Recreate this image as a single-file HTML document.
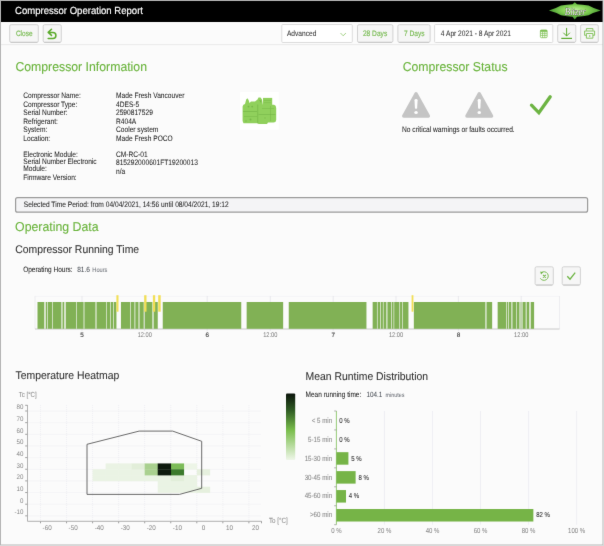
<!DOCTYPE html>
<html><head><meta charset="utf-8"><title>Compressor Operation Report</title>
<style>
html,body{margin:0;padding:0;background:#fbfbfb;}
body{width:604px;height:546px;overflow:hidden;font-family:"Liberation Sans", sans-serif;}
svg{display:block;will-change:transform;text-rendering:geometricPrecision;font-family:"Liberation Sans", sans-serif;}
</style></head><body>
<svg width="604" height="546" viewBox="0 0 604 546">
<defs><filter id="soft" filterUnits="userSpaceOnUse" x="0" y="0" width="604" height="546" color-interpolation-filters="sRGB"><feConvolveMatrix order="3" kernelMatrix="1 12 1 12 144 12 1 12 1" edgeMode="duplicate"/></filter></defs>
<g filter="url(#soft)">
<rect x="0" y="0" width="604" height="546" fill="#fbfbfb" />
<rect x="0" y="0" width="604" height="22" fill="#000" />
<text x="15" y="14.4" font-size="10.3" fill="#fff" textLength="128" lengthAdjust="spacingAndGlyphs" stroke="#fff" stroke-width="0.18">Compressor Operation Report</text>
<defs>
<radialGradient id="lg" cx="50%" cy="45%" r="55%">
<stop offset="0" stop-color="#c2f09e"/><stop offset="0.45" stop-color="#86d257"/><stop offset="1" stop-color="#3a8f28"/>
</radialGradient>
<linearGradient id="cb" x1="0" y1="0" x2="0" y2="1">
<stop offset="0" stop-color="#0b140b"/><stop offset="0.25" stop-color="#2f5b24"/><stop offset="0.55" stop-color="#79bd4b"/><stop offset="1" stop-color="#eef6e8"/>
</linearGradient>
</defs>
<path d="M548.9,10.4 Q555.5,8.8 561,5.6 Q567,4.6 572.6,4.3 L574.8,2.2 L577,4.3 Q582.6,4.6 588.6,5.6 Q594,8.8 600.8,10.4 Q594,12.1 588.6,15.3 Q582.6,16.4 577,16.7 L574.8,19.4 L572.6,16.7 Q567,16.4 561,15.3 Q555.5,12.1 548.9,10.4 Z" fill="url(#lg)"/>
<text x="564.8" y="14.9" font-size="10.6" fill="#e8e8e8" font-style="italic" font-family="Liberation Serif" stroke="#2a2a2a" stroke-width="0.45" paint-order="stroke" textLength="21" lengthAdjust="spacingAndGlyphs">Bitzer</text>
<rect x="9.7" y="24.7" width="28.599999999999998" height="17.599999999999998" rx="1.5" fill="#f6f6f6" stroke="#d2d2d2" stroke-width="1"/>
<line x1="10.7" y1="42.4" x2="37.3" y2="42.4" stroke="#c4c4c4" stroke-width="0.9"/>
<text x="15.9" y="35.9" font-size="7.836" fill="#72b84a"  textLength="16.69" lengthAdjust="spacingAndGlyphs" stroke="#72b84a" stroke-width="0.12">Close</text>
<rect x="43.2" y="24.7" width="18.099999999999994" height="17.599999999999998" rx="1.5" fill="#f6f6f6" stroke="#d2d2d2" stroke-width="1"/>
<line x1="44.2" y1="42.4" x2="60.3" y2="42.4" stroke="#c4c4c4" stroke-width="0.9"/>
<path d="M51.5,29.3 L48.2,32.4 L51.5,35.4 M48.4,32.4 L52.9,32.4 A3,3 0 0 1 52.9,38.4 L48.2,38.4" fill="none" stroke="#5cab2e" stroke-width="1.55" stroke-linecap="round" stroke-linejoin="round"/>
<rect x="281.8" y="24.5" width="70.5" height="18" rx="1" fill="#fff" stroke="#dcdcdc" stroke-width="1"/>
<text x="286.9" y="35.9" font-size="7.956" fill="#333"  textLength="29.49" lengthAdjust="spacingAndGlyphs" stroke="#333" stroke-width="0.05">Advanced</text>
<path d="M340.5,33 L343.2,35.8 L345.9,33" fill="none" stroke="#7cbf55" stroke-width="0.7"/>
<rect x="357.5" y="24.7" width="35.39999999999998" height="17.599999999999998" rx="1.5" fill="#f6f6f6" stroke="#d2d2d2" stroke-width="1"/>
<line x1="358.5" y1="42.4" x2="391.9" y2="42.4" stroke="#c4c4c4" stroke-width="0.9"/>
<text x="362.9" y="35.9" font-size="7.956" fill="#72b84a"  textLength="24.32" lengthAdjust="spacingAndGlyphs" stroke="#72b84a" stroke-width="0.12">28 Days</text>
<rect x="397.9" y="24.7" width="32.200000000000045" height="17.599999999999998" rx="1.5" fill="#f6f6f6" stroke="#d2d2d2" stroke-width="1"/>
<line x1="398.9" y1="42.4" x2="429.1" y2="42.4" stroke="#c4c4c4" stroke-width="0.9"/>
<text x="404" y="35.9" font-size="7.956" fill="#72b84a"  textLength="20.63" lengthAdjust="spacingAndGlyphs" stroke="#72b84a" stroke-width="0.12">7 Days</text>
<rect x="434.6" y="24.5" width="118.2" height="18" rx="1" fill="#fff" stroke="#dcdcdc" stroke-width="1"/>
<text x="440.8" y="35.9" font-size="7.956" fill="#333"  textLength="70.04" lengthAdjust="spacingAndGlyphs" stroke="#333" stroke-width="0.05">4 Apr 2021 - 8 Apr 2021</text>
<rect x="540.4" y="30" width="6.7" height="7.7" rx="1" fill="none" stroke="#7dc052" stroke-width="0.8"/>
<rect x="540.4" y="30" width="6.7" height="1.8" fill="#7dc052" />
<line x1="540.6" y1="33.3" x2="546.9" y2="33.3" stroke="#7dc052" stroke-width="0.7"/>
<line x1="540.6" y1="35.4" x2="546.9" y2="35.4" stroke="#7dc052" stroke-width="0.7"/>
<line x1="542.6" y1="31.5" x2="542.6" y2="37.6" stroke="#7dc052" stroke-width="0.7"/>
<line x1="544.8" y1="31.5" x2="544.8" y2="37.6" stroke="#7dc052" stroke-width="0.7"/>
<rect x="557.7" y="24.7" width="18.09999999999991" height="17.599999999999998" rx="1.5" fill="#f6f6f6" stroke="#d2d2d2" stroke-width="1"/>
<line x1="558.7" y1="42.4" x2="574.8" y2="42.4" stroke="#c4c4c4" stroke-width="0.9"/>
<path d="M566.6,28.3 L566.6,35.8 M563.6,33 L566.6,36 L569.6,33" fill="none" stroke="#5cab2e" stroke-width="1" stroke-linecap="round"/>
<rect x="561.3" y="37.8" width="10.7" height="1.2" fill="#5cab2e" />
<rect x="580.6" y="24.7" width="17.699999999999932" height="17.599999999999998" rx="1.5" fill="#f6f6f6" stroke="#d2d2d2" stroke-width="1"/>
<line x1="581.6" y1="42.4" x2="597.3" y2="42.4" stroke="#c4c4c4" stroke-width="0.9"/>
<path d="M586.4,30.6 L586.4,28.6 L592.9,28.6 L592.9,30.6 M586.4,35.3 L584.6,35.3 L584.6,31 L594.6,31 L594.6,35.3 L592.9,35.3 M586.4,33.5 L592.9,33.5 L592.9,38.2 L586.4,38.2 Z" fill="none" stroke="#7dc052" stroke-width="0.9" stroke-linejoin="round"/>
<circle cx="589.7" cy="36" r="0.8" fill="#7dc052"/>
<line x1="1" y1="44.6" x2="603" y2="44.6" stroke="#e6e6e6" stroke-width="0.8"/>
<text x="15.4" y="71.3" font-size="12.883" fill="#6ab43c"  textLength="131.61" lengthAdjust="spacingAndGlyphs" stroke="#6ab43c" stroke-width="0.1">Compressor Information</text>
<text x="23.3" y="97.9" font-size="7.956" fill="#222"  textLength="57.48" lengthAdjust="spacingAndGlyphs" stroke="#222" stroke-width="0.05">Compressor Name:</text>
<text x="23.3" y="106.5" font-size="7.956" fill="#222"  textLength="54.04" lengthAdjust="spacingAndGlyphs" stroke="#222" stroke-width="0.05">Compressor Type:</text>
<text x="23.3" y="115.2" font-size="7.956" fill="#222"  textLength="44.22" lengthAdjust="spacingAndGlyphs" stroke="#222" stroke-width="0.05">Serial Number:</text>
<text x="23.3" y="123.6" font-size="7.956" fill="#222"  textLength="34.64" lengthAdjust="spacingAndGlyphs" stroke="#222" stroke-width="0.05">Refrigerant:</text>
<text x="23.3" y="132.1" font-size="7.956" fill="#222"  textLength="23.95" lengthAdjust="spacingAndGlyphs" stroke="#222" stroke-width="0.05">System:</text>
<text x="23.3" y="140.6" font-size="7.956" fill="#222"  textLength="26.91" lengthAdjust="spacingAndGlyphs" stroke="#222" stroke-width="0.05">Location:</text>
<text x="23.3" y="156.9" font-size="7.956" fill="#222"  textLength="54.54" lengthAdjust="spacingAndGlyphs" stroke="#222" stroke-width="0.05">Electronic Module:</text>
<text x="23.3" y="164.4" font-size="7.956" fill="#222"  textLength="73.33" lengthAdjust="spacingAndGlyphs" stroke="#222" stroke-width="0.05">Serial Number Electronic</text>
<text x="23.3" y="171.1" font-size="7.956" fill="#222"  textLength="23.59" lengthAdjust="spacingAndGlyphs" stroke="#222" stroke-width="0.05">Module:</text>
<text x="23.3" y="180.1" font-size="7.956" fill="#222"  textLength="53.42" lengthAdjust="spacingAndGlyphs" stroke="#222" stroke-width="0.05">Firmware Version:</text>
<text x="116" y="97.9" font-size="7.956" fill="#222"  textLength="68.42" lengthAdjust="spacingAndGlyphs" stroke="#222" stroke-width="0.05">Made Fresh Vancouver</text>
<text x="116" y="106.5" font-size="7.956" fill="#222"  textLength="23.21" lengthAdjust="spacingAndGlyphs" stroke="#222" stroke-width="0.05">4DES-5</text>
<text x="116" y="115.2" font-size="7.956" fill="#222"  textLength="36.87" lengthAdjust="spacingAndGlyphs" stroke="#222" stroke-width="0.05">2590817529</text>
<text x="116" y="123.6" font-size="7.956" fill="#222"  textLength="20.27" lengthAdjust="spacingAndGlyphs" stroke="#222" stroke-width="0.05">R404A</text>
<text x="116" y="132.1" font-size="7.956" fill="#222"  textLength="42.37" lengthAdjust="spacingAndGlyphs" stroke="#222" stroke-width="0.05">Cooler system</text>
<text x="116" y="140.6" font-size="7.956" fill="#222"  textLength="56.74" lengthAdjust="spacingAndGlyphs" stroke="#222" stroke-width="0.05">Made Fresh POCO</text>
<text x="116" y="156.9" font-size="7.956" fill="#222"  textLength="31.68" lengthAdjust="spacingAndGlyphs" stroke="#222" stroke-width="0.05">CM-RC-01</text>
<text x="116" y="165.2" font-size="7.956" fill="#222"  textLength="81.85" lengthAdjust="spacingAndGlyphs" stroke="#222" stroke-width="0.05">815292000601FT19200013</text>
<text x="116" y="173.8" font-size="7.956" fill="#222"  textLength="9.22" lengthAdjust="spacingAndGlyphs" stroke="#222" stroke-width="0.05">n/a</text>
<rect x="239.8" y="92" width="38.9" height="37.6" fill="#ffffff" />
<g fill="#90d05c"><path d="M242.6,106.5 Q243,104.3 245,104 L246.2,99.5 L247.4,98.2 L248.6,100 L249.5,103 L251,101.5 L255,101.5 L257.5,99.5 L258.5,97.6 L260.5,97.5 L262,99.5 L263,105.5 L258.5,105.5 L258.5,123.3 L243.5,123.3 L242.6,121 Z"/><rect x="263" y="97.9" width="9.2" height="7.2"/><path d="M257,104.8 L274,104.8 Q276.2,105.2 276.2,108 L276.2,120 Q276,122.6 273.5,122.6 L268,122.6 L267,124 L258.5,124 L257,122 Z"/></g>
<g fill="#74b544" opacity="0.7"><rect x="244" y="116" width="13" height="0.6"/><rect x="264" y="100" width="7" height="0.6"/><rect x="264" y="102.5" width="7" height="0.6"/><circle cx="246" cy="121" r="0.8"/><circle cx="265" cy="118" r="0.7"/><rect x="262" y="108" width="12" height="0.6"/><rect x="270" y="106" width="0.6" height="15"/></g><g fill="#6fb043" opacity="0.75"><rect x="243" y="111.3" width="14" height="0.7"/><circle cx="248.5" cy="106.6" r="0.9"/><circle cx="252.2" cy="106.6" r="0.9"/><circle cx="250.5" cy="119.5" r="1"/><rect x="257.4" y="104.5" width="0.8" height="19"/><rect x="258.5" y="114" width="17" height="0.6"/><path d="M259,100 L261.5,100.5 L261,103 Z"/></g>
<text x="402.7" y="71.4" font-size="12.863" fill="#6ab43c"  textLength="104.84" lengthAdjust="spacingAndGlyphs" stroke="#6ab43c" stroke-width="0.1">Compressor Status</text>
<path d="M416.05,93.6 L428.5,116.1 L403.6,116.1 Z" fill="#c4c4c4" stroke="#c4c4c4" stroke-width="3.1" stroke-linejoin="round"/>
<path d="M414.5,100.2 Q414.5,98.9 416.05,98.9 Q417.6,98.9 417.6,100.2 L417.15000000000003,108.2 Q416.05,109.2 414.95,108.2 Z" fill="#fff"/>
<ellipse cx="416.05" cy="112.6" rx="1.75" ry="1.5" fill="#fff"/>
<path d="M479.25,93.6 L491.7,116.1 L466.8,116.1 Z" fill="#c4c4c4" stroke="#c4c4c4" stroke-width="3.1" stroke-linejoin="round"/>
<path d="M477.7,100.2 Q477.7,98.9 479.25,98.9 Q480.8,98.9 480.8,100.2 L480.35,108.2 Q479.25,109.2 478.15,108.2 Z" fill="#fff"/>
<ellipse cx="479.25" cy="112.6" rx="1.75" ry="1.5" fill="#fff"/>
<text x="402" y="132.2" font-size="7.98" fill="#222"  textLength="112.72" lengthAdjust="spacingAndGlyphs" stroke="#222" stroke-width="0.05">No critical warnings or faults occurred.</text>
<path d="M531.5,105.2 L538.9,112.8 L550.2,96.8" fill="none" stroke="#6db443" stroke-width="3.3" stroke-linecap="round" stroke-linejoin="miter"/>
<rect x="15.6" y="197.6" width="572" height="14.6" rx="2" fill="#f4f4f6" stroke="#9a9a9a" stroke-width="1.2"/>
<text x="23.8" y="206.6" font-size="7.968" fill="#222"  textLength="204.87" lengthAdjust="spacingAndGlyphs" stroke="#222" stroke-width="0.05">Selected Time Period: from 04/04/2021, 14:56 until 08/04/2021, 19:12</text>
<text x="15.1" y="230.5" font-size="12.915" fill="#6ab43c"  textLength="83.42" lengthAdjust="spacingAndGlyphs" stroke="#6ab43c" stroke-width="0.1">Operating Data</text>
<text x="15.3" y="253.0" font-size="11.139" fill="#333"  textLength="123.81" lengthAdjust="spacingAndGlyphs" stroke="#333" stroke-width="0.08">Compressor Running Time</text>
<text x="23.2" y="271.8" font-size="7.788" fill="#222"  textLength="49.42" lengthAdjust="spacingAndGlyphs" stroke="#222" stroke-width="0.05">Operating Hours:</text>
<text x="77.2" y="271.9" font-size="7.567" fill="#4a4f56"  textLength="12.81" lengthAdjust="spacingAndGlyphs" stroke="#4a4f56" stroke-width="0.05">81.6</text>
<text x="92.3" y="271.9" font-size="6.509" fill="#6f737a"  textLength="15.10" lengthAdjust="spacingAndGlyphs" stroke="#6f737a" stroke-width="0.05">Hours</text>
<rect x="535.1" y="266.8" width="18.199999999999932" height="18.19999999999999" rx="1.5" fill="#f6f6f6" stroke="#d2d2d2" stroke-width="1"/>
<line x1="536.1" y1="285.1" x2="552.3" y2="285.1" stroke="#c4c4c4" stroke-width="0.9"/>
<path d="M541.5,272.5 A4.3,4.3 0 1 1 540.3,278.3" fill="none" stroke="#6db443" stroke-width="0.9"/>
<path d="M540.2,271.4 L543.2,272.3 L541,274.6 Z" fill="#6db443"/>
<path d="M543,274.8 L545.8,277.6 M545.8,274.8 L543,277.6" stroke="#6db443" stroke-width="1.1"/>
<rect x="562.2" y="266.8" width="18.199999999999932" height="18.19999999999999" rx="1.5" fill="#f6f6f6" stroke="#d2d2d2" stroke-width="1"/>
<line x1="563.2" y1="285.1" x2="579.4" y2="285.1" stroke="#c4c4c4" stroke-width="0.9"/>
<path d="M567.3,276.3 L570,279.2 L575.2,272.6" fill="none" stroke="#6db443" stroke-width="1.3"/>
<line x1="35" y1="296.4" x2="559.5" y2="296.4" stroke="#ececf0" stroke-width="0.5"/>
<line x1="35" y1="296" x2="35" y2="329" stroke="#e4e4ea" stroke-width="0.6"/>
<line x1="559.5" y1="296" x2="559.5" y2="329" stroke="#e4e4ea" stroke-width="0.6"/>
<line x1="82" y1="296" x2="82" y2="331" stroke="#dedee6" stroke-width="0.6"/>
<line x1="144.6" y1="296" x2="144.6" y2="331" stroke="#dedee6" stroke-width="0.6"/>
<line x1="207.2" y1="296" x2="207.2" y2="331" stroke="#dedee6" stroke-width="0.6"/>
<line x1="270.3" y1="296" x2="270.3" y2="331" stroke="#dedee6" stroke-width="0.6"/>
<line x1="333.2" y1="296" x2="333.2" y2="331" stroke="#dedee6" stroke-width="0.6"/>
<line x1="396" y1="296" x2="396" y2="331" stroke="#dedee6" stroke-width="0.6"/>
<line x1="458.4" y1="296" x2="458.4" y2="331" stroke="#dedee6" stroke-width="0.6"/>
<line x1="521.2" y1="296" x2="521.2" y2="331" stroke="#dedee6" stroke-width="0.6"/>
<line x1="35" y1="329" x2="559.5" y2="329" stroke="#c8c8c8" stroke-width="1"/>
<rect x="37.5" y="302" width="6.8" height="26.8" fill="#81b155" />
<rect x="45.7" y="302" width="1.65" height="26.8" fill="#81b155" />
<rect x="47.95" y="302" width="4.35" height="26.8" fill="#81b155" />
<rect x="52.9" y="302" width="8.5" height="26.8" fill="#81b155" />
<rect x="62.5" y="302" width="1.8" height="26.8" fill="#81b155" />
<rect x="65.7" y="302" width="10.35" height="26.8" fill="#81b155" />
<rect x="76.65" y="302" width="6.95" height="26.8" fill="#81b155" />
<rect x="84.4" y="302" width="11.1" height="26.8" fill="#81b155" />
<rect x="96.5" y="302" width="9.9" height="26.8" fill="#81b155" />
<rect x="107.0" y="302" width="3.35" height="26.8" fill="#81b155" />
<rect x="110.95" y="302" width="2.3" height="26.8" fill="#81b155" />
<rect x="113.85" y="302" width="2.6" height="26.8" fill="#81b155" />
<rect x="120.95" y="302" width="9.2" height="26.8" fill="#81b155" />
<rect x="130.75" y="302" width="3.75" height="26.8" fill="#81b155" />
<rect x="135.3" y="302" width="3.2" height="26.8" fill="#81b155" />
<rect x="139.5" y="302" width="4.2" height="26.8" fill="#81b155" />
<rect x="144.7" y="302" width="7.7" height="26.8" fill="#81b155" />
<rect x="153.6" y="302" width="4.15" height="26.8" fill="#81b155" />
<rect x="162.75" y="302" width="78.5" height="26.8" fill="#81b155" />
<rect x="246.65" y="302" width="36.5" height="26.8" fill="#81b155" />
<rect x="288.75" y="302" width="77.7" height="26.8" fill="#81b155" />
<rect x="372.65" y="302" width="4.3" height="26.8" fill="#81b155" />
<rect x="377.55" y="302" width="2.65" height="26.8" fill="#81b155" />
<rect x="380.8" y="302" width="2.1" height="26.8" fill="#81b155" />
<rect x="383.5" y="302" width="2.9" height="26.8" fill="#81b155" />
<rect x="387.4" y="302" width="3.75" height="26.8" fill="#81b155" />
<rect x="391.75" y="302" width="1.85" height="26.8" fill="#81b155" />
<rect x="394.2" y="302" width="5.25" height="26.8" fill="#81b155" />
<rect x="400.05" y="302" width="2.35" height="26.8" fill="#81b155" />
<rect x="403.0" y="302" width="5.45" height="26.8" fill="#81b155" />
<rect x="413.85" y="302" width="71.55" height="26.8" fill="#81b155" />
<rect x="486.5" y="302" width="5.65" height="26.8" fill="#81b155" />
<rect x="497.65" y="302" width="8.5" height="26.8" fill="#81b155" />
<rect x="506.75" y="302" width="1.5" height="26.8" fill="#81b155" />
<rect x="508.85" y="302" width="2.55" height="26.8" fill="#81b155" />
<rect x="512.4" y="302" width="4.0" height="26.8" fill="#81b155" />
<rect x="517.0" y="302" width="2.25" height="26.8" fill="#81b155" />
<rect x="522.85" y="302" width="2.85" height="26.8" fill="#81b155" />
<rect x="526.6" y="302" width="2.7" height="26.8" fill="#81b155" />
<rect x="530.7" y="302" width="3.4" height="26.8" fill="#81b155" />
<rect x="519.3" y="302" width="3.6" height="26.8" fill="#81b155" opacity="0.45"/>
<rect x="116.4" y="295.2" width="2.0999999999999943" height="16.5" fill="#f2df55" />
<rect x="144.2" y="295.2" width="2.3000000000000114" height="16.5" fill="#f2df55" />
<rect x="152.9" y="295.2" width="2.299999999999983" height="16.5" fill="#f2df55" />
<rect x="158.2" y="295.2" width="2.5" height="16.5" fill="#f2df55" />
<rect x="411.6" y="295.2" width="1.7999999999999545" height="16.5" fill="#f2df55" />
<text x="82" y="336.6" font-size="6.3" fill="#444" text-anchor="middle"  stroke="#444" stroke-width="0.12">5</text>
<text x="144.8" y="336.5" font-size="6.804" fill="#7a7a7a" text-anchor="middle"  textLength="14.19" lengthAdjust="spacingAndGlyphs">12:00</text>
<text x="207.2" y="336.6" font-size="6.3" fill="#444" text-anchor="middle"  stroke="#444" stroke-width="0.12">6</text>
<text x="270.3" y="336.5" font-size="6.804" fill="#7a7a7a" text-anchor="middle"  textLength="14.19" lengthAdjust="spacingAndGlyphs">12:00</text>
<text x="333.2" y="336.6" font-size="6.3" fill="#444" text-anchor="middle"  stroke="#444" stroke-width="0.12">7</text>
<text x="396" y="336.5" font-size="6.804" fill="#7a7a7a" text-anchor="middle"  textLength="14.19" lengthAdjust="spacingAndGlyphs">12:00</text>
<text x="458.4" y="336.6" font-size="6.3" fill="#444" text-anchor="middle"  stroke="#444" stroke-width="0.12">8</text>
<text x="521.2" y="336.5" font-size="6.804" fill="#7a7a7a" text-anchor="middle"  textLength="14.19" lengthAdjust="spacingAndGlyphs">12:00</text>
<text x="15.5" y="379.2" font-size="11.16" fill="#333"  textLength="103.77" lengthAdjust="spacingAndGlyphs" stroke="#333" stroke-width="0.08">Temperature Heatmap</text>
<text x="18.7" y="396.8" font-size="7.32" fill="#8a8a8a"  textLength="18.03" lengthAdjust="spacingAndGlyphs" stroke="#8a8a8a" stroke-width="0.05">Tc [°C]</text>
<line x1="27.5" y1="411.00" x2="261.5" y2="411.00" stroke="#e2e2ea" stroke-width="0.5" stroke-dasharray="1,1"/>
<line x1="25.2" y1="411.00" x2="27.5" y2="411.00" stroke="#888" stroke-width="0.8"/>
<text x="23.5" y="409.40000000000003" font-size="6.696" fill="#858585" text-anchor="end"  textLength="6.90" lengthAdjust="spacingAndGlyphs">80</text>
<line x1="27.5" y1="422.65" x2="261.5" y2="422.65" stroke="#e2e2ea" stroke-width="0.5" stroke-dasharray="1,1"/>
<line x1="25.2" y1="422.65" x2="27.5" y2="422.65" stroke="#888" stroke-width="0.8"/>
<text x="23.5" y="421.05" font-size="6.696" fill="#858585" text-anchor="end"  textLength="6.90" lengthAdjust="spacingAndGlyphs">70</text>
<line x1="27.5" y1="434.30" x2="261.5" y2="434.30" stroke="#e2e2ea" stroke-width="0.5" stroke-dasharray="1,1"/>
<line x1="25.2" y1="434.30" x2="27.5" y2="434.30" stroke="#888" stroke-width="0.8"/>
<text x="23.5" y="432.70000000000005" font-size="6.696" fill="#858585" text-anchor="end"  textLength="6.90" lengthAdjust="spacingAndGlyphs">60</text>
<line x1="27.5" y1="445.95" x2="261.5" y2="445.95" stroke="#e2e2ea" stroke-width="0.5" stroke-dasharray="1,1"/>
<line x1="25.2" y1="445.95" x2="27.5" y2="445.95" stroke="#888" stroke-width="0.8"/>
<text x="23.5" y="444.35" font-size="6.696" fill="#858585" text-anchor="end"  textLength="6.90" lengthAdjust="spacingAndGlyphs">50</text>
<line x1="27.5" y1="457.60" x2="261.5" y2="457.60" stroke="#e2e2ea" stroke-width="0.5" stroke-dasharray="1,1"/>
<line x1="25.2" y1="457.60" x2="27.5" y2="457.60" stroke="#888" stroke-width="0.8"/>
<text x="23.5" y="456.00000000000006" font-size="6.696" fill="#858585" text-anchor="end"  textLength="6.90" lengthAdjust="spacingAndGlyphs">40</text>
<line x1="27.5" y1="469.25" x2="261.5" y2="469.25" stroke="#e2e2ea" stroke-width="0.5" stroke-dasharray="1,1"/>
<line x1="25.2" y1="469.25" x2="27.5" y2="469.25" stroke="#888" stroke-width="0.8"/>
<text x="23.5" y="467.65000000000003" font-size="6.696" fill="#858585" text-anchor="end"  textLength="6.90" lengthAdjust="spacingAndGlyphs">30</text>
<line x1="27.5" y1="480.90" x2="261.5" y2="480.90" stroke="#e2e2ea" stroke-width="0.5" stroke-dasharray="1,1"/>
<line x1="25.2" y1="480.90" x2="27.5" y2="480.90" stroke="#888" stroke-width="0.8"/>
<text x="23.5" y="479.3" font-size="6.696" fill="#858585" text-anchor="end"  textLength="6.90" lengthAdjust="spacingAndGlyphs">20</text>
<line x1="27.5" y1="492.55" x2="261.5" y2="492.55" stroke="#e2e2ea" stroke-width="0.5" stroke-dasharray="1,1"/>
<line x1="25.2" y1="492.55" x2="27.5" y2="492.55" stroke="#888" stroke-width="0.8"/>
<text x="23.5" y="490.95000000000005" font-size="6.696" fill="#858585" text-anchor="end"  textLength="6.90" lengthAdjust="spacingAndGlyphs">10</text>
<line x1="27.5" y1="504.20" x2="261.5" y2="504.20" stroke="#e2e2ea" stroke-width="0.5" stroke-dasharray="1,1"/>
<line x1="25.2" y1="504.20" x2="27.5" y2="504.20" stroke="#888" stroke-width="0.8"/>
<text x="23.5" y="502.6" font-size="6.696" fill="#858585" text-anchor="end"  textLength="3.45" lengthAdjust="spacingAndGlyphs">0</text>
<line x1="27.5" y1="515.85" x2="261.5" y2="515.85" stroke="#e2e2ea" stroke-width="0.5" stroke-dasharray="1,1"/>
<line x1="25.2" y1="515.85" x2="27.5" y2="515.85" stroke="#888" stroke-width="0.8"/>
<text x="23.5" y="514.25" font-size="6.696" fill="#858585" text-anchor="end"  textLength="8.96" lengthAdjust="spacingAndGlyphs">-10</text>
<line x1="40.50" y1="405.1" x2="40.50" y2="521.3" stroke="#e2e2ea" stroke-width="0.5" stroke-dasharray="1,1"/>
<line x1="40.50" y1="521.3" x2="40.50" y2="523.3" stroke="#888" stroke-width="0.8"/>
<text x="47.1" y="529.7" font-size="6.804" fill="#858585" text-anchor="middle"  textLength="9.11" lengthAdjust="spacingAndGlyphs">-60</text>
<line x1="66.55" y1="405.1" x2="66.55" y2="521.3" stroke="#e2e2ea" stroke-width="0.5" stroke-dasharray="1,1"/>
<line x1="66.55" y1="521.3" x2="66.55" y2="523.3" stroke="#888" stroke-width="0.8"/>
<text x="73.14999999999999" y="529.7" font-size="6.804" fill="#858585" text-anchor="middle"  textLength="9.11" lengthAdjust="spacingAndGlyphs">-50</text>
<line x1="92.60" y1="405.1" x2="92.60" y2="521.3" stroke="#e2e2ea" stroke-width="0.5" stroke-dasharray="1,1"/>
<line x1="92.60" y1="521.3" x2="92.60" y2="523.3" stroke="#888" stroke-width="0.8"/>
<text x="99.19999999999999" y="529.7" font-size="6.804" fill="#858585" text-anchor="middle"  textLength="9.11" lengthAdjust="spacingAndGlyphs">-40</text>
<line x1="118.65" y1="405.1" x2="118.65" y2="521.3" stroke="#e2e2ea" stroke-width="0.5" stroke-dasharray="1,1"/>
<line x1="118.65" y1="521.3" x2="118.65" y2="523.3" stroke="#888" stroke-width="0.8"/>
<text x="125.25" y="529.7" font-size="6.804" fill="#858585" text-anchor="middle"  textLength="9.11" lengthAdjust="spacingAndGlyphs">-30</text>
<line x1="144.70" y1="405.1" x2="144.70" y2="521.3" stroke="#e2e2ea" stroke-width="0.5" stroke-dasharray="1,1"/>
<line x1="144.70" y1="521.3" x2="144.70" y2="523.3" stroke="#888" stroke-width="0.8"/>
<text x="151.29999999999998" y="529.7" font-size="6.804" fill="#858585" text-anchor="middle"  textLength="9.11" lengthAdjust="spacingAndGlyphs">-20</text>
<line x1="170.75" y1="405.1" x2="170.75" y2="521.3" stroke="#e2e2ea" stroke-width="0.5" stroke-dasharray="1,1"/>
<line x1="170.75" y1="521.3" x2="170.75" y2="523.3" stroke="#888" stroke-width="0.8"/>
<text x="177.35" y="529.7" font-size="6.804" fill="#858585" text-anchor="middle"  textLength="9.11" lengthAdjust="spacingAndGlyphs">-10</text>
<line x1="196.80" y1="405.1" x2="196.80" y2="521.3" stroke="#e2e2ea" stroke-width="0.5" stroke-dasharray="1,1"/>
<line x1="196.80" y1="521.3" x2="196.80" y2="523.3" stroke="#888" stroke-width="0.8"/>
<text x="203.4" y="529.7" font-size="6.804" fill="#858585" text-anchor="middle"  textLength="3.50" lengthAdjust="spacingAndGlyphs">0</text>
<line x1="222.85" y1="405.1" x2="222.85" y2="521.3" stroke="#e2e2ea" stroke-width="0.5" stroke-dasharray="1,1"/>
<line x1="222.85" y1="521.3" x2="222.85" y2="523.3" stroke="#888" stroke-width="0.8"/>
<text x="229.45" y="529.7" font-size="6.804" fill="#858585" text-anchor="middle"  textLength="7.01" lengthAdjust="spacingAndGlyphs">10</text>
<line x1="248.90" y1="405.1" x2="248.90" y2="521.3" stroke="#e2e2ea" stroke-width="0.5" stroke-dasharray="1,1"/>
<line x1="248.90" y1="521.3" x2="248.90" y2="523.3" stroke="#888" stroke-width="0.8"/>
<text x="255.5" y="529.7" font-size="6.804" fill="#858585" text-anchor="middle"  textLength="7.01" lengthAdjust="spacingAndGlyphs">20</text>
<line x1="25.2" y1="405.3" x2="27.5" y2="405.3" stroke="#888" stroke-width="0.8"/>
<line x1="27.5" y1="405" x2="27.5" y2="521.3" stroke="#a8a8a8" stroke-width="0.9"/>
<line x1="27.5" y1="521.3" x2="261.5" y2="521.3" stroke="#a8a8a8" stroke-width="0.9"/>
<line x1="261.5" y1="521.3" x2="261.5" y2="523.3" stroke="#888" stroke-width="0.8"/>
<text x="268.9" y="523.1" font-size="7.56" fill="#8a8a8a"  textLength="18.97" lengthAdjust="spacingAndGlyphs" stroke="#8a8a8a" stroke-width="0.05">To [°C]</text>
<rect x="183.78" y="463.43" width="13.33" height="6.13" fill="#edf5e7" />
<rect x="105.62" y="463.43" width="13.33" height="6.13" fill="#eaf3e4" />
<rect x="118.65" y="463.43" width="13.33" height="6.13" fill="#eaf3e4" />
<rect x="92.60" y="469.25" width="13.33" height="6.13" fill="#eaf3e4" />
<rect x="105.62" y="469.25" width="13.33" height="6.13" fill="#eaf3e4" />
<rect x="118.65" y="469.25" width="13.33" height="6.13" fill="#eaf3e4" />
<rect x="131.68" y="469.25" width="13.33" height="6.13" fill="#eaf3e4" />
<rect x="92.60" y="475.07" width="13.33" height="6.13" fill="#eaf3e4" />
<rect x="105.62" y="475.07" width="13.33" height="6.13" fill="#eaf3e4" />
<rect x="118.65" y="475.07" width="13.33" height="6.13" fill="#eaf3e4" />
<rect x="131.68" y="475.07" width="13.33" height="6.13" fill="#eaf3e4" />
<rect x="144.70" y="475.07" width="13.33" height="6.13" fill="#eaf3e4" />
<rect x="157.72" y="475.07" width="13.33" height="6.13" fill="#eaf3e4" />
<rect x="183.78" y="475.07" width="13.33" height="6.13" fill="#eaf3e4" />
<rect x="157.72" y="480.90" width="13.33" height="6.13" fill="#eaf3e4" />
<rect x="170.75" y="480.90" width="13.33" height="6.13" fill="#eaf3e4" />
<rect x="183.78" y="480.90" width="13.33" height="6.13" fill="#eaf3e4" />
<rect x="157.72" y="486.73" width="13.33" height="6.13" fill="#eaf3e4" />
<rect x="170.75" y="486.73" width="13.33" height="6.13" fill="#eaf3e4" />
<rect x="183.78" y="486.73" width="13.33" height="6.13" fill="#eaf3e4" />
<rect x="196.80" y="469.25" width="13.33" height="6.13" fill="#e6f0de" />
<rect x="196.80" y="486.73" width="13.33" height="6.13" fill="#e6f0de" />
<rect x="131.68" y="463.43" width="13.33" height="6.13" fill="#e2eed9" />
<rect x="170.75" y="475.07" width="13.33" height="6.13" fill="#e2eed9" />
<rect x="144.70" y="463.43" width="13.33" height="6.13" fill="#a9d08f" />
<rect x="144.70" y="469.25" width="13.33" height="6.13" fill="#a9d08f" />
<rect x="170.75" y="463.43" width="13.33" height="6.13" fill="#7cbc58" />
<rect x="170.75" y="469.25" width="13.33" height="6.13" fill="#3c7a2c" />
<rect x="157.72" y="463.43" width="13.33" height="6.13" fill="#0e1a0e" />
<rect x="157.72" y="469.25" width="13.33" height="6.13" fill="#0e1a0e" />
<path d="M87,494.4 L87,444.3 L139.1,431.1 L172.7,431.1 L201.7,441.3 L201.7,488.3 L179.5,494.4 Z" fill="none" stroke="#5a5a5a" stroke-width="0.9"/>
<rect x="286" y="393.5" width="9.2" height="66.4" rx="1" fill="url(#cb)"/>
<text x="305.6" y="379.7" font-size="11.128" fill="#333"  textLength="122.54" lengthAdjust="spacingAndGlyphs" stroke="#333" stroke-width="0.08">Mean Runtime Distribution</text>
<text x="305.6" y="397.1" font-size="7.8" fill="#222"  textLength="55.64" lengthAdjust="spacingAndGlyphs" stroke="#222" stroke-width="0.05">Mean running time:</text>
<text x="366.5" y="397.3" font-size="7.493" fill="#4a4f56"  textLength="15.89" lengthAdjust="spacingAndGlyphs" stroke="#4a4f56" stroke-width="0.05">104.1</text>
<text x="385.6" y="397.3" font-size="6.175" fill="#6f737a"  textLength="18.80" lengthAdjust="spacingAndGlyphs" stroke="#6f737a" stroke-width="0.05">minutes</text>
<line x1="384.44" y1="411" x2="384.44" y2="524.7" stroke="#e6e6ee" stroke-width="0.6"/>
<text x="384.44" y="533.3" font-size="7.2" fill="#8a8a8a" text-anchor="middle"  textLength="13.68" lengthAdjust="spacingAndGlyphs" stroke="#8a8a8a" stroke-width="0.05">20 %</text>
<line x1="432.48" y1="411" x2="432.48" y2="524.7" stroke="#e6e6ee" stroke-width="0.6"/>
<text x="432.48" y="533.3" font-size="7.2" fill="#8a8a8a" text-anchor="middle"  textLength="13.68" lengthAdjust="spacingAndGlyphs" stroke="#8a8a8a" stroke-width="0.05">40 %</text>
<line x1="480.52" y1="411" x2="480.52" y2="524.7" stroke="#e6e6ee" stroke-width="0.6"/>
<text x="480.52" y="533.3" font-size="7.2" fill="#8a8a8a" text-anchor="middle"  textLength="13.68" lengthAdjust="spacingAndGlyphs" stroke="#8a8a8a" stroke-width="0.05">60 %</text>
<line x1="528.56" y1="411" x2="528.56" y2="524.7" stroke="#e6e6ee" stroke-width="0.6"/>
<text x="528.56" y="533.3" font-size="7.2" fill="#8a8a8a" text-anchor="middle"  textLength="13.68" lengthAdjust="spacingAndGlyphs" stroke="#8a8a8a" stroke-width="0.05">80 %</text>
<line x1="576.60" y1="411" x2="576.60" y2="524.7" stroke="#e6e6ee" stroke-width="0.6"/>
<text x="576.60" y="533.3" font-size="7.2" fill="#8a8a8a" text-anchor="middle"  textLength="17.01" lengthAdjust="spacingAndGlyphs" stroke="#8a8a8a" stroke-width="0.05">100 %</text>
<text x="336.4" y="533.3" font-size="7.2" fill="#8a8a8a" text-anchor="middle"  textLength="10.34" lengthAdjust="spacingAndGlyphs" stroke="#8a8a8a" stroke-width="0.05">0 %</text>
<line x1="336.4" y1="411" x2="336.4" y2="524.7" stroke="#7cbf55" stroke-width="0.8"/>
<text x="332.2" y="422.67" font-size="7.44" fill="#858585" text-anchor="end"  textLength="20.50" lengthAdjust="spacingAndGlyphs" stroke="#858585" stroke-width="0.05">&lt; 5 min</text>
<line x1="334.2" y1="411.00" x2="336.4" y2="411.00" stroke="#999" stroke-width="0.8"/>
<text x="339.20" y="422.67" font-size="7.2" fill="#333"  textLength="10.34" lengthAdjust="spacingAndGlyphs" stroke="#333" stroke-width="0.08">0 %</text>
<text x="332.2" y="441.62" font-size="7.44" fill="#858585" text-anchor="end"  textLength="24.12" lengthAdjust="spacingAndGlyphs" stroke="#858585" stroke-width="0.05">5-15 min</text>
<line x1="334.2" y1="429.95" x2="336.4" y2="429.95" stroke="#999" stroke-width="0.8"/>
<text x="339.20" y="441.62" font-size="7.2" fill="#333"  textLength="10.34" lengthAdjust="spacingAndGlyphs" stroke="#333" stroke-width="0.08">0 %</text>
<text x="332.2" y="460.57" font-size="7.44" fill="#858585" text-anchor="end"  textLength="27.57" lengthAdjust="spacingAndGlyphs" stroke="#858585" stroke-width="0.05">15-30 min</text>
<line x1="334.2" y1="448.90" x2="336.4" y2="448.90" stroke="#999" stroke-width="0.8"/>
<rect x="336.4" y="452.17" width="12.01" height="12.5" fill="#76b447" />
<text x="351.21" y="460.57" font-size="7.2" fill="#333"  textLength="10.34" lengthAdjust="spacingAndGlyphs" stroke="#333" stroke-width="0.08">5 %</text>
<text x="332.2" y="479.52000000000004" font-size="7.44" fill="#858585" text-anchor="end"  textLength="27.57" lengthAdjust="spacingAndGlyphs" stroke="#858585" stroke-width="0.05">30-45 min</text>
<line x1="334.2" y1="467.85" x2="336.4" y2="467.85" stroke="#999" stroke-width="0.8"/>
<rect x="336.4" y="471.12" width="19.22" height="12.5" fill="#76b447" />
<text x="358.42" y="479.52000000000004" font-size="7.2" fill="#333"  textLength="10.34" lengthAdjust="spacingAndGlyphs" stroke="#333" stroke-width="0.08">8 %</text>
<text x="332.2" y="498.47" font-size="7.44" fill="#858585" text-anchor="end"  textLength="27.57" lengthAdjust="spacingAndGlyphs" stroke="#858585" stroke-width="0.05">45-60 min</text>
<line x1="334.2" y1="486.80" x2="336.4" y2="486.80" stroke="#999" stroke-width="0.8"/>
<rect x="336.4" y="490.07" width="9.61" height="12.5" fill="#76b447" />
<text x="348.81" y="498.47" font-size="7.2" fill="#333"  textLength="10.34" lengthAdjust="spacingAndGlyphs" stroke="#333" stroke-width="0.08">4 %</text>
<text x="332.2" y="517.4200000000001" font-size="7.44" fill="#858585" text-anchor="end"  textLength="22.23" lengthAdjust="spacingAndGlyphs" stroke="#858585" stroke-width="0.05">&gt;60 min</text>
<line x1="334.2" y1="505.75" x2="336.4" y2="505.75" stroke="#999" stroke-width="0.8"/>
<rect x="336.4" y="509.02" width="196.96" height="12.5" fill="#76b447" />
<text x="536.16" y="517.4200000000001" font-size="7.2" fill="#333"  textLength="13.68" lengthAdjust="spacingAndGlyphs" stroke="#333" stroke-width="0.08">82 %</text>
<line x1="334.2" y1="524.7" x2="336.4" y2="524.7" stroke="#999" stroke-width="0.8"/>
<rect x="0.5" y="0.5" width="602.5" height="544.5" fill="none" stroke="#b4b4b4" stroke-width="1"/>
<rect x="603" y="0" width="1" height="546" fill="#d8d8d8" />
<rect x="0" y="545" width="604" height="1" fill="#d8d8d8" />
</g>
</svg>
</body></html>
